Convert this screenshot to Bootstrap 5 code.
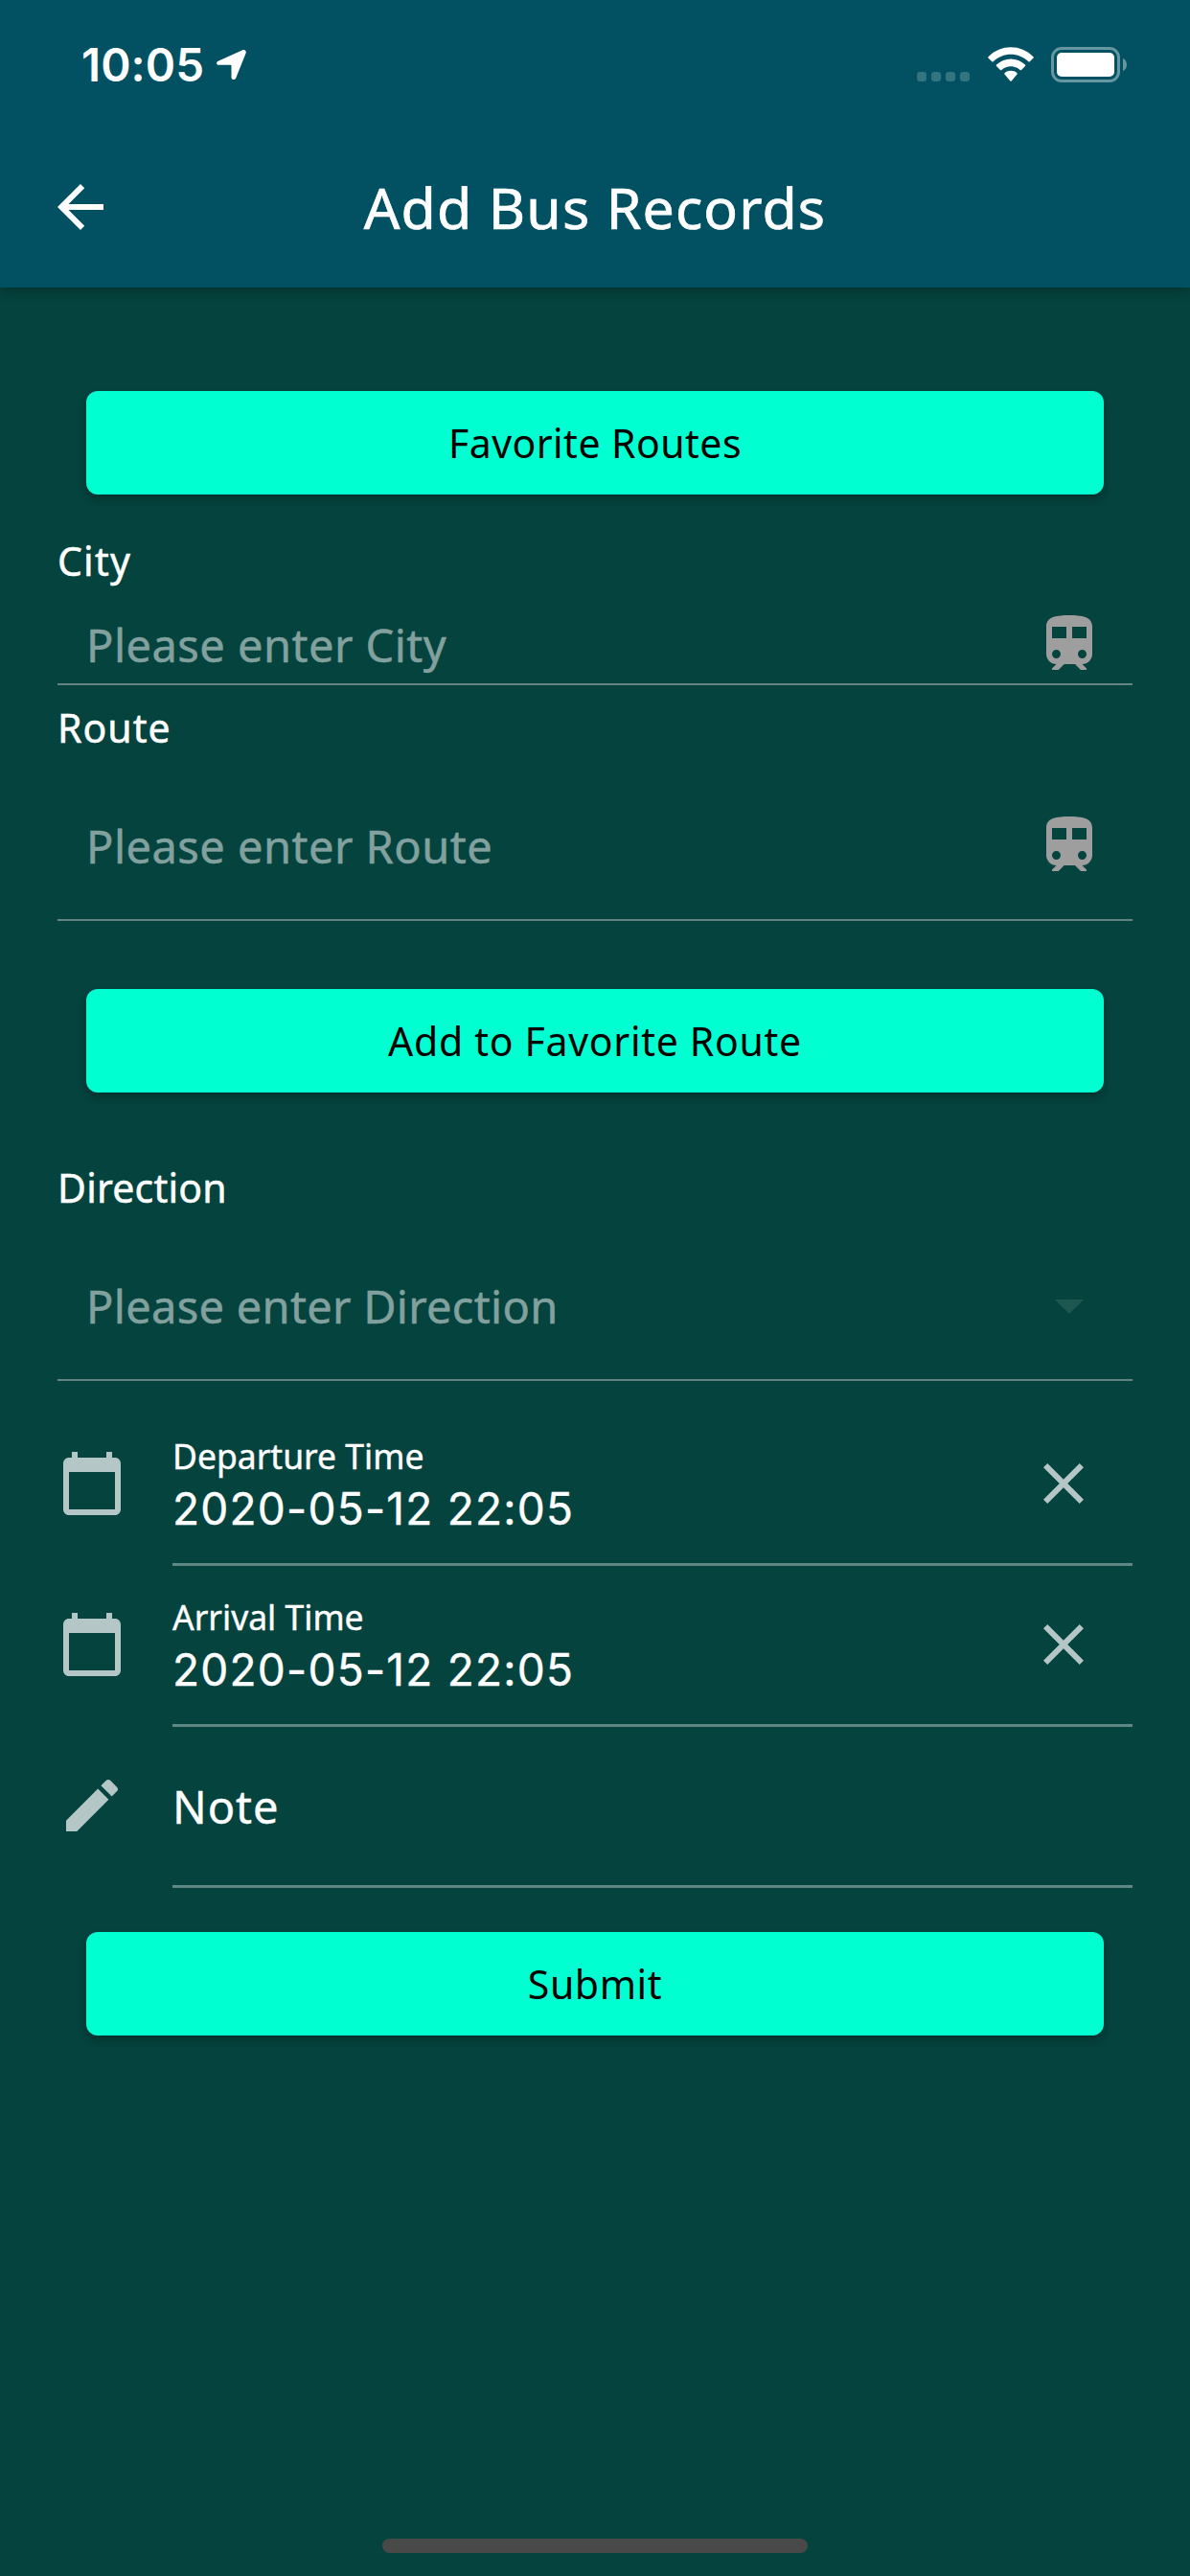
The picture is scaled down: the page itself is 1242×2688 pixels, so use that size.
<!DOCTYPE html>
<html lang="en">
<head>
<meta charset="utf-8">
<meta name="viewport" content="width=device-width, initial-scale=1">
<title>Add Bus Records</title>
<link href="https://cdn.jsdelivr.net/npm/bootstrap@5.3.0/dist/css/bootstrap.min.css" rel="stylesheet">
<style>
  body { background: #05433e; color: #fff; font-family: "Noto Sans", sans-serif; height: 2688px; overflow: hidden; }
  svg { display: block; flex: none; }
  .app-header { height: 300px; background: #015163; box-shadow: 0 3px 12px rgba(0,0,0,.3); }
  .status-bar { height: 132px; padding: 49px 65px 0 85px; }
  .clock { font: 600 47.5px/38px Inter, sans-serif; width: 141px; letter-spacing: .1px; }
  .icon-location { margin-top: 3px; }
  .icon-wifi { margin-left: 19px; }
  .icon-battery { margin-left: 18px; }
  .title-bar { height: 168px; padding: 0 48px; }
  .title-bar h1 { font-size: 59px; font-weight: 400; letter-spacing: 1.11px; -webkit-text-stroke: .7px #fff; }
  .form-area { padding: 108px 60px 0; }
  .btn-mint { height: 108px; margin: 0 30px; padding: 1px 0 0; border: 0; border-radius: 12px; background: #00ffd1; color: #000; font-size: 41px; letter-spacing: .6px; box-shadow: 0 5px 9px rgba(0,0,0,.28); }
  .field-label { font-size: 41px; line-height: 60px; letter-spacing: .5px; padding-top: 1px; height: 60px; -webkit-text-stroke: .5px #fff; }
  .field-row { padding: 58px 30px 41px; border-bottom: 2px solid #658380; font-size: 47px; line-height: 72px; letter-spacing: .48px; color: #82a19e; }
  .field-row.tight { padding-top: 22px; padding-bottom: 5px; }
  .field-row span { height: 72px; padding-top: 1px; -webkit-text-stroke: .5px #82a19e; }
  .entry-row { height: 168px; }
  .entry-icon { width: 120px; padding-top: 46px; }
  .entry-body { border-bottom: 3px solid #5f8885; -webkit-text-stroke: .4px #fff; }
  .entry-caption { font-size: 35.5px; line-height: 40px; margin-top: 33px; }
  .entry-value { font: 46px/70px Inter, sans-serif; letter-spacing: 1.23px; }
  .entry-note { font-size: 47px; line-height: 64px; letter-spacing: .96px; padding-top: 51px; }
  .entry-clear { margin: 46px 36px 0 0; }
  .home-bar { width: 444px; height: 15px; border-radius: 8px; background: #494949; }
</style>
</head>
<body class="d-flex flex-column">
<svg width="0" height="0" class="position-absolute" aria-hidden="true">
  <symbol id="train" viewBox="0 0 24 24"><path d="M12 2c-4.42 0-8 .5-8 4v9.5C4 17.43 5.57 19 7.5 19L6 20.5v.5h2.23l2-2H14l2 2h2v-.5L16.5 19c1.93 0 3.5-1.57 3.5-3.5V6c0-3.5-3.58-4-8-4zM7.5 17c-.83 0-1.5-.67-1.5-1.5S6.67 14 7.5 14s1.5.67 1.5 1.5S8.33 17 7.5 17zm3.5-7H6V6h5v4zm2 0V6h5v4h-5zm3.5 7c-.83 0-1.5-.67-1.5-1.5s.67-1.5 1.5-1.5 1.5.67 1.5 1.5-.67 1.5-1.5 1.5z"/></symbol>
  <symbol id="calendar" viewBox="0 0 24 24"><path d="M20 3h-1V1h-2v2H7V1H5v2H4c-1.1 0-2 .9-2 2v16c0 1.1.9 2 2 2h16c1.1 0 2-.9 2-2V5c0-1.1-.9-2-2-2zm0 18H4V8h16v13z"/></symbol>
  <symbol id="clear" viewBox="0 0 24 24"><path d="M19 6.41L17.59 5 12 10.59 6.41 5 5 6.41 10.59 12 5 17.59 6.41 19 12 13.41 17.59 19 19 17.59 13.41 12z"/></symbol>
</svg>

<header class="app-header flex-shrink-0">
  <div class="status-bar d-flex align-items-start">
    <div class="clock">10:05</div>
    <svg class="icon-location" width="31" height="31" viewBox="0 0 31 31" fill="#fff"><path d="M2.2 11.6 27.2.3c2.2-.9 4.300 1 3.400 3.300L20.200 29.500c-.9 2.200-4.700 2-4.700-.8V16.600q0-.9-.9-.9H2.300c-2.700 0-3-3.200-.1-4.100z"/></svg>
    <div class="ms-auto d-flex">
      <svg width="55" height="37" viewBox="0 0 55 37" fill="#33747f"><rect y="26" width="10" height="10" rx="3"/><rect x="15" y="26" width="10" height="10" rx="3"/><rect x="30" y="26" width="10" height="10" rx="3"/><rect x="45" y="26" width="10" height="10" rx="3"/></svg>
      <svg class="icon-wifi" width="48" height="37" viewBox="0 0 48 37" fill="#fff"><path d="M.5 10.200C13.500-3.100 34.500-3.100 47.500 10.200q.7.700 0 1.400L43.800 15.300q-.7.600-1.400 0C32 5.200 16 5.200 5.600 15.300q-.7.600-1.400 0L.5 11.600q-.7-.7 0-1.400z"/><path d="M9 18.600c8.500-8.300 21.500-8.300 30 0q.7.700 0 1.400l-4 4q-.7.600-1.400 0c-5.400-5-13.800-5-19.200 0q-.7.600-1.400 0l-4-4q-.7-.7 0-1.400z"/><path d="M17.500 27.200c3.700-3.200 9.300-3.200 13 0q.7.700 0 1.400l-5.800 6.800q-.7.700-1.400 0l-5.800-6.800q-.7-.7 0-1.400z"/></svg>
      <svg class="icon-battery" width="80" height="37" viewBox="0 0 80 37"><rect x="1.500" y="1.500" width="69" height="34" rx="9.500" fill="none" stroke="#6697a1" stroke-width="3"/><rect x="6" y="6" width="60" height="25" rx="5" fill="#fff"/><path d="M75 12c5.300 2 5.300 11 0 13z" fill="#6697a1"/></svg>
    </div>
  </div>
  <div class="title-bar row g-0 align-items-center">
    <div class="col-2"><svg width="72" height="72" viewBox="0 0 24 24" fill="#fff"><path d="M20 11H7.830l5.590-5.590L12 4l-8 8 8 8 1.410-1.410L7.830 13H20v-2z"/></svg></div>
    <h1 class="col-8 mb-0 text-center text-nowrap">Add Bus Records</h1>
  </div>
</header>

<main class="form-area d-flex flex-column flex-grow-1">
  <button type="button" class="btn btn-mint" style="letter-spacing:.46px">Favorite Routes</button>

  <div class="field-label" style="margin-top:38px;letter-spacing:1.2px">City</div>
  <div class="field-row tight d-flex justify-content-between">
    <span>Please enter City</span>
    <svg width="72" height="72" fill="#9e9e9e"><use href="#train"/></svg>
  </div>

  <div class="field-label" style="margin-top:13px;letter-spacing:1px">Route</div>
  <div class="field-row d-flex justify-content-between">
    <span>Please enter Route</span>
    <svg width="72" height="72" fill="#9e9e9e"><use href="#train"/></svg>
  </div>

  <button type="button" class="btn btn-mint" style="margin-top:71px;letter-spacing:.7px">Add to Favorite Route</button>

  <div class="field-label" style="margin-top:68px;letter-spacing:.2px">Direction</div>
  <div class="field-row d-flex justify-content-between" style="letter-spacing:.3px">
    <span>Please enter Direction</span>
    <svg width="72" height="72" viewBox="0 0 24 24" fill="#1e5650"><path d="M7 10l5 5 5-5z"/></svg>
  </div>

  <!-- each entry is 168px tall, its rule included -->
  <div class="entry-row d-flex" style="margin-top:25px">
    <div class="entry-icon"><svg width="72" height="72" fill="#b4c6c5"><use href="#calendar"/></svg></div>
    <div class="entry-body d-flex flex-grow-1 justify-content-between">
      <div><div class="entry-caption">Departure Time</div><div class="entry-value">2020-05-12 22:05</div></div>
      <svg class="entry-clear" width="72" height="72" fill="#b4c6c5"><use href="#clear"/></svg>
    </div>
  </div>
  <div class="entry-row d-flex">
    <div class="entry-icon"><svg width="72" height="72" fill="#b4c6c5"><use href="#calendar"/></svg></div>
    <div class="entry-body d-flex flex-grow-1 justify-content-between">
      <div><div class="entry-caption">Arrival Time</div><div class="entry-value">2020-05-12 22:05</div></div>
      <svg class="entry-clear" width="72" height="72" fill="#b4c6c5"><use href="#clear"/></svg>
    </div>
  </div>
  <div class="entry-row d-flex">
    <div class="entry-icon"><svg width="72" height="72" viewBox="0 0 24 24" fill="#b4c6c5"><path d="M3 17.250V21h3.750L17.810 9.940l-3.750-3.750L3 17.250zM20.710 7.040c.39-.39.39-1.020 0-1.410l-2.340-2.340c-.39-.39-1.020-.39-1.410 0l-1.830 1.830 3.750 3.750 1.830-1.830z"/></svg></div>
    <div class="entry-body flex-grow-1"><div class="entry-note">Note</div></div>
  </div>

  <button type="button" class="btn btn-mint" style="margin-top:46px;letter-spacing:.6px">Submit</button>
  <div class="home-bar mt-auto mx-auto" style="margin-bottom:24px"></div>
</main>
<script src="https://cdn.jsdelivr.net/npm/bootstrap@5.3.0/dist/js/bootstrap.bundle.min.js"></script>
</body>
</html>
